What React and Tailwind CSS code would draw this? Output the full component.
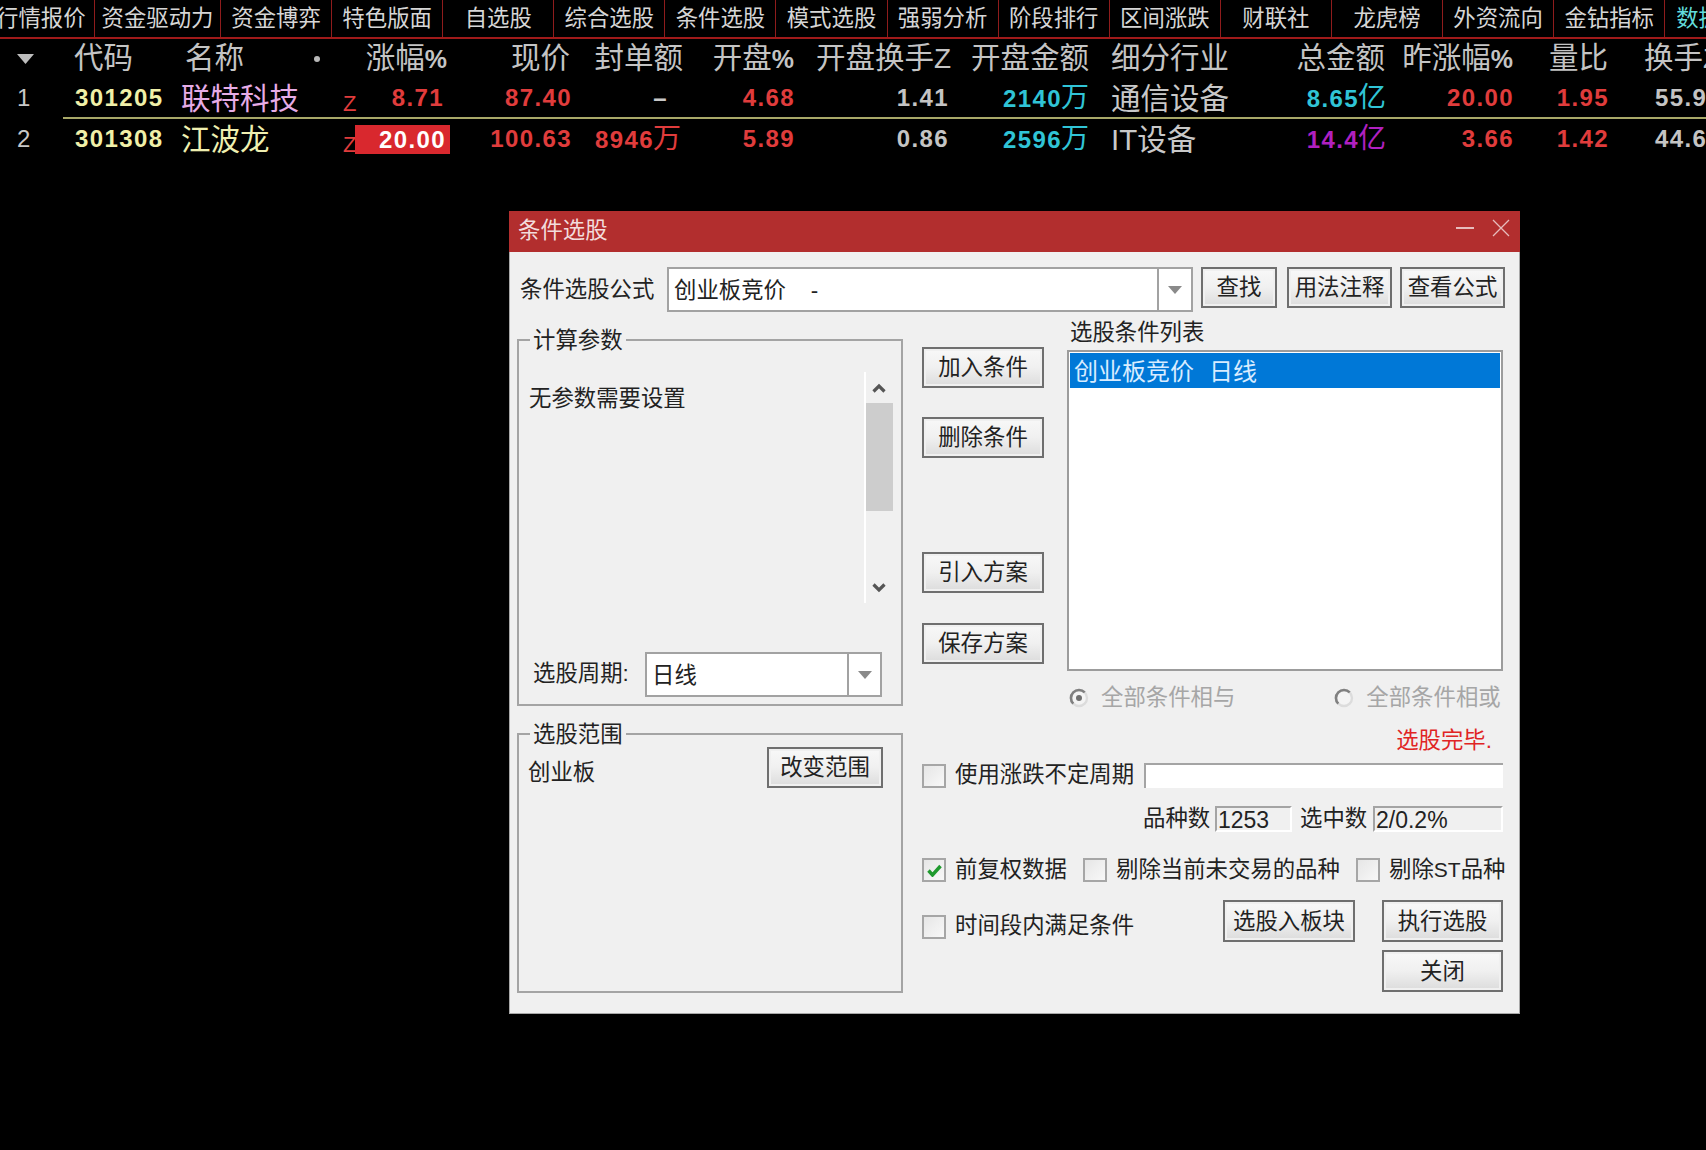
import React from 'react';

const tabs = [
    { label: '资金驱动力', width: 'w-[126px]' },
    { label: '资金博弈', width: 'w-[111.1px]' },
    { label: '特色版面', width: 'w-[111.1px]' },
    { label: '自选股', width: 'w-[111.1px]' },
    { label: '综合选股', width: 'w-[111.1px]' },
    { label: '条件选股', width: 'w-[111.1px]' },
    { label: '模式选股', width: 'w-[111.1px]' },
    { label: '强弱分析', width: 'w-[111.1px]' },
    { label: '阶段排行', width: 'w-[111.1px]' },
    { label: '区间涨跌', width: 'w-[111.1px]' },
    { label: '财联社', width: 'w-[111.1px]' },
    { label: '龙虎榜', width: 'w-[111.1px]' },
    { label: '外资流向', width: 'w-[111.1px]' },
    { label: '金钻指标', width: 'w-[111.1px]' },
];

const stocks = [
    {
        idx: '1', code: '301205', name: '联特科技', nameColor: 'text-[#e6ace6] pt-[3px]',
        rowOffset: 'pt-[2px]',
        pct: '8.71', limitUp: false, price: '87.40', seal: '–', open: '4.68', turn: '1.41',
        amount: '2140', industry: '通信设备', industryOffset: 'pt-[3px]', total: '8.65', totalColor: 'text-[#30c4d6]',
        prev: '20.00', ratio: '1.95', hand: '55.9',
    },
    {
        idx: '2', code: '301308', name: '江波龙', nameColor: 'text-[#efefb0] pt-[2px]',
        rowOffset: '',
        pct: '20.00', limitUp: true, price: '100.63', seal: '8946', open: '5.89', turn: '0.86',
        amount: '2596', industry: 'IT设备', industryOffset: 'pt-[2px]', total: '14.4', totalColor: 'text-[#b020c0]',
        prev: '3.66', ratio: '1.42', hand: '44.6',
    },
];

function HeaderRow() {
    return (
        <div className="flex h-[38px] items-center pt-[1px] text-[29.5px] text-[#c4c4c4] whitespace-nowrap">
            <div className="w-[62px] pl-[17px]">
                <svg width="17" height="10" viewBox="0 0 17 10"><polygon points="0,0 17,0 8.5,10" fill="#bdbdbd" /></svg>
            </div>
            <div className="w-[119px] pl-[12px]">代码</div>
            <div className="w-[162px] pl-[4px] flex items-center">
                <span>名称</span>
                <span className="ml-[70px] w-[6px] h-[6px] rounded-full bg-[#b8b8b8]"></span>
            </div>
            <div className="w-[107px] text-right pr-[3px]">涨幅<span className="text-[25px] font-bold">%</span></div>
            <div className="w-[120px] text-right">现价</div>
            <div className="w-[113px] text-right">封单额</div>
            <div className="w-[111px] text-right">开盘<span className="text-[25px] font-bold">%</span></div>
            <div className="w-[157px] text-right">开盘换手<span className="text-[28px]">Z</span></div>
            <div className="w-[138px] text-right">开盘金额</div>
            <div className="w-[201px] pl-[22px]">细分行业</div>
            <div className="w-[95px] text-right">总金额</div>
            <div className="w-[128px] text-right">昨涨幅<span className="text-[25px] font-bold">%</span></div>
            <div className="w-[95px] text-right">量比</div>
            <div className="w-[98px] pl-[36px]">换手<span className="text-[28px]">Z</span></div>
        </div>
    );
}

function Unit({ children }) {
    return <span className="text-[28px] font-normal tracking-normal -ml-[1px]">{children}</span>;
}

function StockRow({ stock }) {
    return (
        <div className={`flex h-[40px] items-center text-[24px] font-bold tracking-[1.4px] text-[#e03c3c] whitespace-nowrap ${stock.rowOffset}`}>
            <div className="w-[62px] pl-[17px] text-[#c8c8c8] font-normal">{stock.idx}</div>
            <div className="w-[119px] pl-[13px] text-[#f0f0a8]">{stock.code}</div>
            <div className={`w-[162px] text-[29.5px] font-normal tracking-normal ${stock.nameColor}`}>{stock.name}</div>
            <div className="w-[107px] flex items-center h-[30px]">
                <span className="w-[12px] text-[22px] leading-none font-normal pt-[12px]">Z</span>
                {stock.limitUp ? (
                    <div className="w-[95px] h-[29px] bg-[#d9282e] text-white text-right pr-[4px] leading-[29px]">{stock.pct}</div>
                ) : (
                    <div className="w-[87px] text-right"><span className="-mr-[2px]">{stock.pct}</span></div>
                )}
            </div>
            <div className="w-[120px] text-right"><span className="-mr-[2px]">{stock.price}</span></div>
            <div className="w-[113px] text-right">
                {stock.seal === '–' ? <span className="pr-[15px] text-[#c8c8c8]">–</span> : <span className="mr-[2px]">{stock.seal}<Unit>万</Unit></span>}
            </div>
            <div className="w-[111px] text-right"><span className="-mr-[1px]">{stock.open}</span></div>
            <div className="w-[157px] text-right pr-[2px] text-[#c4c4c4]">{stock.turn}</div>
            <div className="w-[138px] text-right text-[#30c4d6]">{stock.amount}<Unit>万</Unit></div>
            <div className={`w-[201px] pl-[22px] text-[29.5px] font-normal tracking-normal text-[#c8c8c8] ${stock.industryOffset}`}>{stock.industry}</div>
            <div className={`w-[95px] text-right ${stock.totalColor}`}><span className="-mr-[1px]">{stock.total}<Unit>亿</Unit></span></div>
            <div className="w-[128px] text-right"><span className="-mr-[1px]">{stock.prev}</span></div>
            <div className="w-[95px] text-right"><span className="-mr-[1px]">{stock.ratio}</span></div>
            <div className="w-[98px] pl-[47px] text-[#c4c4c4]">{stock.hand}</div>
        </div>
    );
}

function DlgButton({ className, children }) {
    return (
        <button className={`flex items-center justify-center border-2 border-[#6f6f6f] bg-linear-to-b from-[#f8f8f8] via-[#f0f0f0] to-[#dcdcdc] pt-[2px] text-[22.4px] leading-none text-[#222] whitespace-nowrap shadow-[inset_0_0_0_2px_#f0f0f0] ${className}`}>
            {children}
        </button>
    );
}

function Caret() {
    return <svg width="14" height="8" viewBox="0 0 14 8"><polygon points="0,0 14,0 7,8" fill="#8a8a8a" /></svg>;
}

function Combo({ className, arrowWidth, children }) {
    return (
        <div className={`flex items-center border-2 border-[#a2a2a2] bg-white ${className}`}>
            <div className="flex-1 pl-[5px] pt-[2px] text-[22.4px] text-[#222] whitespace-pre">{children}</div>
            <div className={`flex h-full items-center justify-center border-l-2 border-[#a2a2a2] ${arrowWidth}`}><Caret /></div>
        </div>
    );
}

function CheckBox({ checked }) {
    return (
        <span className="flex h-[24px] w-[24px] shrink-0 items-center justify-center border-2 border-[#a6a6a6] bg-linear-to-br from-[#e6e6e6] to-[#f8f8f8]">
            {checked && (
                <svg width="15" height="13" viewBox="0 0 15 13">
                    <path d="M1.5 6.5 L5.5 11 L13.5 2" fill="none" stroke="#1f9a2e" strokeWidth="3.4" />
                </svg>
            )}
        </span>
    );
}

function Radio({ checked }) {
    return (
        <svg width="20" height="20" viewBox="0 0 20 20" className="shrink-0">
            <circle cx="10" cy="10" r="8" fill="#f4f4f4" stroke="#dcdcdc" strokeWidth="2.4" />
            <path d="M4.3 15.7 A8 8 0 0 1 15.7 4.3" fill="none" stroke="#808080" strokeWidth="2.6" />
            {checked && <circle cx="10" cy="10" r="3" fill="#707070" />}
        </svg>
    );
}

function Chevron({ up }) {
    return (
        <svg width="14" height="10" viewBox="0 0 14 10" className="-ml-[2px]">
            <path d={up ? 'M1.5 8.5 L7 3 L12.5 8.5' : 'M1.5 1.5 L7 7 L12.5 1.5'} fill="none" stroke="#555" strokeWidth="3.2" />
        </svg>
    );
}

function Group({ title, className, children }) {
    return (
        <fieldset className={`border-2 border-[#a4a4a4] ${className}`}>
            <legend className="ml-[11px] h-[26px] px-[3px] pt-[1px] text-[22.4px] leading-[26px] text-[#222]">{title}</legend>
            {children}
        </fieldset>
    );
}

function Dialog() {
    return (
        <div className="absolute left-[509px] top-[211px] flex h-[803px] w-[1011px] flex-col border border-t-0 border-[#a8a8a8] bg-[#f0f0f0] text-[22.4px] text-[#222] whitespace-nowrap">
            <div className="flex h-[41px] shrink-0 items-center justify-between bg-[#b22e2e] pl-[9px] pr-[10px] -mx-[1px]">
                <span className="pb-[2px] text-[22.4px] text-[#f2dcdc]">条件选股</span>
                <div className="flex items-center gap-[18px] pb-[7px]">
                    <span className="h-[2px] w-[18px] bg-[#e6bcbc]"></span>
                    <svg width="18" height="18" viewBox="0 0 18 18"><path d="M1 1 L17 17 M17 1 L1 17" stroke="#e6bcbc" strokeWidth="1.3" /></svg>
                </div>
            </div>
            <div className="flex flex-col pt-[15px] pl-[7px]">
                <div className="flex h-[45px] items-start">
                    <span className="w-[150px] pl-[3px] pt-[6px]">条件选股公式</span>
                    <Combo className="h-[45px] w-[526px]" arrowWidth="w-[34px]">{'创业板竞价    -'}</Combo>
                    <DlgButton className="ml-[8px] h-[41px] w-[76px]">查找</DlgButton>
                    <DlgButton className="ml-[10px] h-[41px] w-[105px]">用法注释</DlgButton>
                    <DlgButton className="ml-[8px] h-[41px] w-[105px]">查看公式</DlgButton>
                </div>
                <div className="mt-[7px] flex">
                    <div className="flex w-[386px] shrink-0 flex-col pt-[8px]">
                        <Group title="计算参数" className="h-[379px]">
                            <div className="flex h-[231px] pt-[0px] mt-[19px]">
                                <div className="flex-1 pl-[10px] pt-[10px]">无参数需要设置</div>
                                <div className="mr-[8px] flex w-[29px] flex-col border-l-2 border-white">
                                    <div className="flex h-[31px] items-center justify-center"><Chevron up /></div>
                                    <div className="h-[108px] bg-[#cdcdcd]"></div>
                                    <div className="flex flex-1 items-end justify-center pb-[10px]"><Chevron /></div>
                                </div>
                            </div>
                            <div className="mt-[49px] flex items-center pl-[14px]">
                                <span className="w-[112px] pb-[1px]">选股周期:</span>
                                <Combo className="h-[45px] w-[237px]" arrowWidth="w-[33px]">日线</Combo>
                            </div>
                        </Group>
                        <Group title="选股范围" className="mt-[15px] h-[272px]">
                            <div className="flex items-start justify-between pl-[9px] pr-[18px]">
                                <span className="mt-[9px]">创业板</span>
                                <DlgButton className="h-[41px] w-[116px]">改变范围</DlgButton>
                            </div>
                        </Group>
                    </div>
                    <div className="ml-[19px] flex w-[581px] flex-col">
                        <div className="flex">
                            <div className="flex w-[122px] flex-col pt-[28px]">
                                <DlgButton className="h-[41px]">加入条件</DlgButton>
                                <DlgButton className="mt-[29px] h-[41px]">删除条件</DlgButton>
                                <DlgButton className="mt-[94px] h-[41px]">引入方案</DlgButton>
                                <DlgButton className="mt-[30px] h-[41px]">保存方案</DlgButton>
                            </div>
                            <div className="ml-[23px] flex w-[436px] flex-col">
                                <div className="h-[31px] pl-[3px] leading-[28px]">选股条件列表</div>
                                <div className="h-[321px] border-2 border-[#9c9c9c] bg-white p-[1px]">
                                    <div className="flex h-[35px] items-center bg-[#0078d7] pl-[4px] pt-[3px] text-[24px] text-[#d8ecff]">
                                        <span>创业板竞价</span>
                                        <span className="ml-[15px]">日线</span>
                                    </div>
                                </div>
                            </div>
                        </div>
                        <div className="ml-[147px] mt-[15px] flex h-[24px] items-center text-[#a6a6a6]">
                            <Radio checked />
                            <span className="ml-[12px]">全部条件相与</span>
                            <span className="ml-[99px]"><Radio /></span>
                            <span className="ml-[12px]">全部条件相或</span>
                        </div>
                        <div className="mt-[16px] h-[30px] pr-[11px] text-right leading-[30px] text-[#e02424]">选股完毕.</div>
                        <div className="mt-[7px] flex h-[25px] items-center">
                            <CheckBox />
                            <span className="ml-[9px] w-[189px] shrink-0 pb-[2px]">使用涨跌不定周期</span>
                            <div className="h-[25px] w-[359px] border-l-2 border-t-2 border-[#a4a4a4] bg-white"></div>
                        </div>
                        <div className="mt-[18px] flex h-[26px] items-center pl-[221px]">
                            <span className="w-[72px]">品种数</span>
                            <div className="h-[26px] w-[77px] border-2 border-[#a4a4a4] border-b-white border-r-white pl-[1px] text-[23px] leading-[24px]">1253</div>
                            <span className="ml-[8px] w-[73px]">选中数</span>
                            <div className="h-[26px] w-[130px] border-2 border-[#a4a4a4] border-b-white border-r-white pl-[1px] text-[23px] leading-[24px]">2/0.2%</div>
                        </div>
                        <div className="mt-[26px] flex h-[24px] items-center">
                            <CheckBox checked />
                            <span className="ml-[9px] w-[128px] shrink-0 pb-[1px]">前复权数据</span>
                            <CheckBox />
                            <span className="ml-[9px] w-[240px] shrink-0 pb-[1px]">剔除当前未交易的品种</span>
                            <CheckBox />
                            <span className="ml-[9px] pb-[1px]">剔除<span className="text-[21px]">ST</span>品种</span>
                        </div>
                        <div className="mt-[18px] flex items-start">
                            <div className="mt-[9px] flex items-center">
                                <CheckBox />
                                <span className="ml-[9px] w-[268px] pb-[2px]">时间段内满足条件</span>
                            </div>
                            <div className="flex flex-col items-end">
                                <div className="flex">
                                    <DlgButton className="h-[42px] w-[132px]">选股入板块</DlgButton>
                                    <DlgButton className="ml-[27px] h-[42px] w-[121px]">执行选股</DlgButton>
                                </div>
                                <DlgButton className="mt-[8px] h-[42px] w-[121px]">关闭</DlgButton>
                            </div>
                        </div>
                    </div>
                </div>
            </div>
        </div>
    );
}

export default function App() {
    return (
        <div className="relative h-[1150px] w-[1706px] overflow-hidden bg-black font-['Liberation_Sans','Noto_Sans_CJK_SC',sans-serif]">
            <div className="flex h-[39px] border-b-2 border-[#a01a1a] text-[22.4px] text-[#d6d6d6] whitespace-nowrap">
                <div className="flex w-[95px] shrink-0 items-center border-r border-[#8f1c1c] overflow-hidden"><span className="-ml-[4px]">行情报价</span></div>
                {tabs.map((tab) => (
                    <div key={tab.label} className={`flex shrink-0 items-center justify-center border-r border-[#8f1c1c] ${tab.width}`}>{tab.label}</div>
                ))}
                <div className="flex flex-1 items-center overflow-hidden pl-[11px] text-[#62dcdc]">数据中心</div>
            </div>
            <HeaderRow />
            <StockRow stock={stocks[0]} />
            <div className="ml-[63px] h-[2px] bg-[#a8a868]"></div>
            <StockRow stock={stocks[1]} />
            <Dialog />
        </div>
    );
}
